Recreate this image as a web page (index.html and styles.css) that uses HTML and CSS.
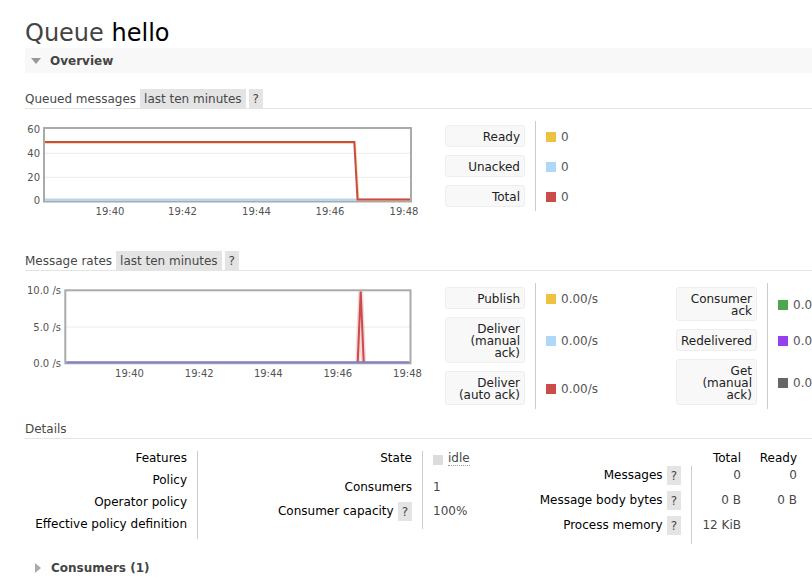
FILE: index.html
```html
<!DOCTYPE html>
<html>
<head>
<meta charset="utf-8">
<title>Queue hello</title>
<link rel="stylesheet" href="styles.css">
</head>
<body>
<div class="main">
  <h1 class="title"><span class="title-kind">Queue</span> <span class="title-name">hello</span></h1>

  <div class="section">
    <h2 class="section-head open"><span class="tri-down"></span>Overview</h2>
    <div class="section-body">

      <h3 class="subhead"><span class="subhead-text">Queued messages</span><span class="pill">last ten minutes</span><span class="help">?</span></h3>
      <div class="chart-row chart-row-queued">
        <svg class="chart" width="400" height="100" viewBox="0 0 400 100">
          <line class="grid" x1="20" y1="34.3" x2="385" y2="34.3"/>
          <line class="grid" x1="20" y1="58.3" x2="385" y2="58.3"/>
          <rect class="frame" x="19" y="9" width="367" height="73.5"/>
          <polyline class="ln ln-unacked" points="20,80.6 332,80.6"/>
          <polyline class="ln ln-ready" points="20,23.8 329.8,23.8 333.4,80.6 385,80.6"/>
          <polyline class="ln ln-total" points="20,23.1 329.3,23.1 332.5,80.6 385,80.6"/>
          <text class="ylab" x="15" y="13.6">60</text>
          <text class="ylab" x="15" y="37.9">40</text>
          <text class="ylab" x="15" y="61.9">20</text>
          <text class="ylab" x="15" y="85.3">0</text>
          <text class="xlab" x="85" y="96.3">19:40</text>
          <text class="xlab" x="157.5" y="96.3">19:42</text>
          <text class="xlab" x="231.5" y="96.3">19:44</text>
          <text class="xlab" x="305" y="96.3">19:46</text>
          <text class="xlab" x="379" y="96.3">19:48</text>
        </svg>
        <div class="legend legend-a">
          <div class="lg-label">Ready</div>
          <div class="lg-value"><span class="swatch sw-yellow"></span>0</div>
          <div class="lg-label">Unacked</div>
          <div class="lg-value"><span class="swatch sw-blue"></span>0</div>
          <div class="lg-label">Total</div>
          <div class="lg-value"><span class="swatch sw-red"></span>0</div>
        </div>
      </div>

      <h3 class="subhead"><span class="subhead-text">Message rates</span><span class="pill">last ten minutes</span><span class="help">?</span></h3>
      <div class="chart-row chart-row-rates">
        <svg class="chart" width="400" height="100" viewBox="0 0 400 100">
          <line class="grid" x1="41" y1="46" x2="385" y2="46"/>
          <rect class="frame" x="40.3" y="9.3" width="345.2" height="73"/>
          <polyline class="ln-halo" points="332.7,81.5 335.7,10.5 338.7,81.5"/>
          <polyline class="ln ln-total" points="332.7,81.5 335.7,10.5 338.7,81.5"/>
          <polyline class="ln ln-rates" points="41.3,81.2 384.5,81.2"/>
          <text class="ylab" x="36" y="13.3">10.0 /s</text>
          <text class="ylab" x="36" y="49.6">5.0 /s</text>
          <text class="ylab" x="36" y="85.9">0.0 /s</text>
          <text class="xlab" x="104.5" y="95.9">19:40</text>
          <text class="xlab" x="174.2" y="95.9">19:42</text>
          <text class="xlab" x="243.3" y="95.9">19:44</text>
          <text class="xlab" x="312.8" y="95.9">19:46</text>
          <text class="xlab" x="382.5" y="95.9">19:48</text>
        </svg>
        <div class="legend-pair">
          <div class="legend legend-b">
            <div class="lg-label">Publish</div>
            <div class="lg-value"><span class="swatch sw-yellow"></span>0.00/s</div>
            <div class="lg-label">Deliver (manual ack)</div>
            <div class="lg-value"><span class="swatch sw-blue"></span>0.00/s</div>
            <div class="lg-label">Deliver (auto ack)</div>
            <div class="lg-value"><span class="swatch sw-red"></span>0.00/s</div>
          </div>
          <div class="legend legend-c">
            <div class="lg-label">Consumer ack</div>
            <div class="lg-value"><span class="swatch sw-green"></span>0.00/s</div>
            <div class="lg-label">Redelivered</div>
            <div class="lg-value"><span class="swatch sw-purple"></span>0.00/s</div>
            <div class="lg-label">Get (manual ack)</div>
            <div class="lg-value"><span class="swatch sw-grey"></span>0.00/s</div>
          </div>
        </div>
      </div>

      <h3 class="subhead"><span class="subhead-text">Details</span></h3>
      <div class="details">
        <div class="facts facts-left">
          <div class="f-label">Features</div><div class="f-value"></div>
          <div class="f-label">Policy</div><div class="f-value"></div>
          <div class="f-label">Operator policy</div><div class="f-value"></div>
          <div class="f-label">Effective policy definition</div><div class="f-value"></div>
        </div>
        <div class="facts facts-mid">
          <div class="f-label">State</div>
          <div class="f-value"><span class="status-square"></span><abbr class="status-text">idle</abbr></div>
          <div class="f-label">Consumers</div>
          <div class="f-value">1</div>
          <div class="f-label with-help"><span>Consumer capacity</span><span class="help">?</span></div>
          <div class="f-value tall">100%</div>
        </div>
        <div class="facts facts-right">
          <div class="f-head"></div><div class="f-head">Total</div><div class="f-head">Ready</div>
          <div class="f-label with-help"><span>Messages</span><span class="help">?</span></div>
          <div class="f-num f-total">0</div><div class="f-num">0</div>
          <div class="f-label with-help"><span>Message body bytes</span><span class="help">?</span></div>
          <div class="f-num f-total">0 B</div><div class="f-num">0 B</div>
          <div class="f-label with-help"><span>Process memory</span><span class="help">?</span></div>
          <div class="f-num f-total">12 KiB</div><div class="f-num"></div>
        </div>
      </div>
    </div>
  </div>

  <div class="section">
    <h2 class="section-head closed"><span class="tri-right"></span>Consumers (1)</h2>
  </div>
</div>
</body>
</html>
```
FILE: styles.css
```css
html, body {
  margin: 0;
  padding: 0;
  overflow: hidden;
  background: #fff;
}
body {
  font-family: "DejaVu Sans", "Liberation Sans", sans-serif;
  font-size: 12px;
  color: #484848;
}
.main {
  width: 1100px;
  padding: 19px 0 0 25px;
}
.title {
  margin: 0;
  font-size: 24px;
  line-height: 29px;
  font-weight: normal;
  color: #444;
}
.title-name {
  color: #000;
}
.section-head {
  margin: 0;
  height: 25px;
  display: flex;
  align-items: center;
  font-size: 12px;
  font-weight: bold;
  color: #444;
}
.section-head.open {
  background: #f8f8f8;
}
.section-head.closed {
  margin-top: 11px;
}
.tri-down {
  width: 0;
  height: 0;
  border-left: 5.5px solid transparent;
  border-right: 5.5px solid transparent;
  border-top: 6px solid #999;
  margin: 0 9px 0 6px;
}
.tri-right {
  width: 0;
  height: 0;
  border-top: 5.5px solid transparent;
  border-bottom: 5.5px solid transparent;
  border-left: 6px solid #aaa;
  margin: 0 10px 0 10px;
}
.subhead {
  margin: 16px 0 0;
  display: flex;
  align-items: flex-end;
  font-size: 12px;
  font-weight: normal;
  line-height: 13px;
  color: #484848;
  border-bottom: 1px solid #e4e4e4;
}
.subhead-text {
  padding: 4px 0 2px;
  margin-right: 4px;
}
.pill {
  background: #e4e4e4;
  padding: 4px 4px 2px;
  margin-right: 3px;
}
.help {
  background: #e4e4e4;
  padding: 4px 4px 2px;
  line-height: 13px;
  color: #484848;
}
.chart-row {
  display: flex;
  align-items: flex-start;
}
.chart-row-queued {
  height: 126px;
}
.chart-row-rates {
  height: 132px;
}
.chart {
  display: block;
  flex: none;
  margin-top: 10px;
  margin-right: 20px;
  overflow: visible;
}
.chart .grid {
  stroke: #ececec;
  stroke-width: 1;
}
.chart .frame {
  fill: none;
  stroke: #aaa;
  stroke-width: 2;
}
.chart .ln {
  fill: none;
  stroke-width: 2;
  stroke-linejoin: miter;
}
.chart .ln-unacked { stroke: #afd8f8; }
.chart .ln-ready { stroke: #edc240; opacity: 0.7; }
.chart .ln-total { stroke: #cb4b4b; }
.chart .ln-rates { stroke: #7f7fc9; }
.chart .ln-halo {
  fill: none;
  stroke: rgba(203, 75, 75, 0.22);
  stroke-width: 5;
}
.chart text {
  font-family: "DejaVu Sans", sans-serif;
  font-size: 10px;
  fill: #545454;
}
.chart .ylab { text-anchor: end; }
.chart .xlab { text-anchor: middle; }

.legend-pair {
  display: flex;
}
.legend {
  display: grid;
  column-gap: 10px;
  margin-top: 12px;
  flex: none;
}
.legend-a { grid-template-columns: 80px 141px; }
.legend-b { grid-template-columns: 80px 141px; }
.legend-c { grid-template-columns: 81px 141px; }
.lg-label {
  margin: 4px 0;
  box-sizing: border-box;
  background: #f8f8f8;
  border: 1px solid #eee;
  border-radius: 3px;
  padding: 5px 4px 3px 3px;
  line-height: 12px;
  text-align: right;
  color: #222;
}
.lg-value {
  display: flex;
  align-items: center;
  border-left: 1px solid #ccc;
  padding-left: 10px;
  padding-top: 2px;
  color: #555;
  line-height: 12px;
  white-space: nowrap;
}
.swatch {
  display: inline-block;
  width: 10px;
  height: 10px;
  margin-right: 5px;
  flex: none;
}
.sw-yellow { background: #edc240; }
.sw-blue { background: #afd8f8; }
.sw-red { background: #cb4b4b; }
.sw-green { background: #4da74d; }
.sw-purple { background: #9440ed; }
.sw-grey { background: #666; }

.details {
  display: flex;
  align-items: flex-start;
  margin-top: 12px;
}
.facts {
  display: grid;
  flex: none;
}
.f-label {
  text-align: right;
  color: #000;
  line-height: 14px;
  padding-right: 10px;
}
.f-label.with-help {
  display: flex;
  justify-content: flex-end;
  align-items: center;
  gap: 4px;
  height: 19px;
  line-height: 19px;
}
.f-value {
  border-left: 1px solid #ccc;
  padding-left: 10px;
  line-height: 14px;
  color: #484848;
}
.facts-left {
  grid-template-columns: 172px 22px;
}
.facts-left .f-label {
  padding-bottom: 8px;
}
.facts-mid {
  grid-template-columns: 203px 108px;
  grid-template-rows: 29px 22px 27px;
  align-items: start;
}
.facts-mid .f-value {
  align-self: stretch;
}
.facts-mid .f-value.tall {
  line-height: 19px;
}
.status-square {
  display: inline-block;
  width: 10px;
  height: 10px;
  background: #dcdcdc;
  margin-right: 5px;
  vertical-align: -3px;
}
.status-text {
  text-decoration: none;
  border-bottom: 1px dotted #999;
}
.facts-right {
  grid-template-columns: 161px 50px 56px;
  grid-template-rows: 15px 25px 25px 28px;
  align-items: start;
}
.f-head {
  line-height: 14px;
  text-align: right;
  color: #000;
}
.f-num {
  line-height: 19px;
  text-align: right;
  color: #484848;
}
.f-total {
  align-self: stretch;
  border-left: 1px solid #ccc;
  padding-left: 10px;
}
```
